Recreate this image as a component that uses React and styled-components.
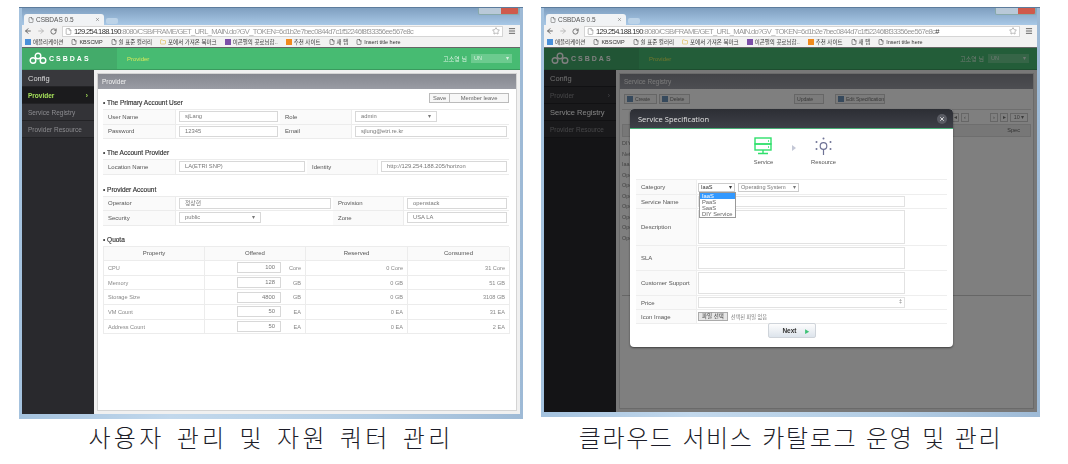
import React from 'react'
import styled, { createGlobalStyle } from 'styled-components'
import { ArrowLeft, ArrowRight, RotateCw, File, Folder, Star, Menu, X } from 'lucide-react'

const GlobalStyle = createGlobalStyle`
  html, body { margin: 0; padding: 0; background: #fff; }
  body { font-family: "Liberation Sans", "Noto Sans CJK KR", sans-serif; }
  * { box-sizing: border-box; }
`

const Stage = styled.div`
  width: 1068px;
  height: 464px;
  padding: 7px 0 0 19px;
  display: flex;
  gap: 18px;
  overflow: hidden;
`
const Figure = styled.figure`
  margin: 0;
  width: ${p => p.$w}px;
  display: flex;
  flex-direction: column;
  align-items: center;
`
const Caption = styled.figcaption`
  margin-top: ${p => p.$top}px;
  font-family: "Noto Sans CJK KR", sans-serif;
  font-weight: 300;
  font-size: 24px;
  line-height: 28px;
  letter-spacing: ${p => p.$track}px;
  word-spacing: ${p => p.$word}px;
  color: #1c1c28;
  white-space: nowrap;
`

const Win = styled.div`
  width: 100%;
  height: ${p => p.$h}px;
  padding: 0 3px 5px;
  display: flex;
  flex-direction: column;
  background: linear-gradient(90deg, #a4c2de, #c2d8ec 30%, #b3cde4 70%, #9ebad6);
  border-top: 1px solid #5d7c9c;
  filter: blur(0.45px);
`
const TabStrip = styled.div`
  height: 17px;
  flex: none;
  display: flex;
  align-items: flex-end;
  padding-left: 2px;
  gap: 2px;
  position: relative;
  background: linear-gradient(180deg, #7f9fc0, #a8c8e6);
`
const Tab = styled.div`
  width: 80px;
  height: 11px;
  background: #f1f3f5;
  border-radius: 3px 3px 0 0;
  font-size: 6.5px;
  color: #555;
  display: flex;
  align-items: center;
  gap: 2px;
  padding: 0 4px;
  span { flex: 1; }
`
const NewTab = styled.div`
  width: 12px;
  height: 6px;
  background: #bcd3e8;
  border-radius: 2px;
  margin-bottom: 1px;
`
const WinButtons = styled.div`
  position: absolute;
  top: 0;
  right: 1px;
  width: 41px;
  height: 7px;
  display: flex;
  border: 1px solid #8aa;
  border-top: 0;
  border-radius: 0 0 2px 2px;
  overflow: hidden;
  i { flex: 1; background: #b9c9d8; }
  i:last-child { flex: 1.6; background: #cf5a4c; }
`
const Toolbar = styled.div`
  height: 12px;
  flex: none;
  background: #f2f2f2;
  display: flex;
  align-items: center;
  gap: 5px;
  padding: 0 4px 0 2px;
  color: #666;
`
const Address = styled.div`
  flex: 1;
  min-width: 0;
  height: 11px;
  background: #fff;
  border: 1px solid #d5d5d5;
  font-size: 7.6px;
  line-height: 9px;
  letter-spacing: -0.68px;
  color: #333;
  display: flex;
  align-items: center;
  gap: 2px;
  padding: 0 2px;
  white-space: nowrap;
  b { font-weight: 400; color: #999; }
  em { flex: 1; }
`
const Bookmarks = styled.div`
  height: 11px;
  flex: none;
  background: #f2f2f2;
  border-bottom: 1px solid #666;
  display: flex;
  align-items: center;
  gap: 8px;
  padding: 0 3px;
  font-size: 5.5px;
  color: #333;
  white-space: nowrap;
`
const Mark = styled.span`
  display: inline-flex;
  align-items: center;
  gap: 2px;
`
const Swatch = styled.i`
  width: 6px;
  height: 6px;
  background: ${p => p.$c};
`

const AppArea = styled.div`
  flex: 1;
  min-height: 0;
  position: relative;
  display: flex;
  flex-direction: column;
  overflow: hidden;
`
const Head = styled.header`
  height: 22px;
  flex: none;
  display: flex;
  align-items: center;
  background: #47bb72;
  border-bottom: 1px solid #3a9a5e;
`
const Brand = styled.div`
  width: 95px;
  height: 100%;
  flex: none;
  background: #43ab6a;
  display: flex;
  align-items: center;
  gap: 2px;
  padding-left: 7px;
  color: #fff;
  font-weight: 700;
  font-size: 7px;
  letter-spacing: 2px;
`
const HeadTitle = styled.div`
  flex: 1;
  padding-left: 10px;
  font-size: 6px;
  color: #d6e85a;
`
const User = styled.div`
  font-size: 6px;
  color: #d5f0de;
  margin-right: 4px;
`
const UserBox = styled.div`
  width: 41px;
  height: 9px;
  margin-right: 8px;
  background: #6ccb8f;
  color: #d5f0de;
  font-size: 5.5px;
  padding: 1px 3px;
  display: flex;
  justify-content: space-between;
`
const Body = styled.div`
  flex: 1;
  min-height: 0;
  display: flex;
`
const Side = styled.nav`
  width: 72px;
  flex: none;
  background: #29292d;
`
const SideItem = styled.div`
  height: 17px;
  display: flex;
  align-items: center;
  justify-content: space-between;
  padding: 0 6px;
  font-size: ${p => (p.$big ? 7.5 : 6.5)}px;
  font-weight: ${p => (p.$active ? 700 : 400)};
  color: ${p => (p.$active ? '#a6e05a' : p.$big ? '#fff' : '#8c8c90')};
  background: ${p => (p.$active ? '#1b1b1d' : p.$head ? '#38383c' : '#333337')};
  border-bottom: 1px solid #232326;
  ${p => p.$head && 'color: #ddd; font-size: 7.5px;'}
`
const Main = styled.main`
  flex: 1;
  min-width: 0;
  padding: 3px;
  background: #f0f0f0;
  display: flex;
`
const Panel = styled.section`
  flex: 1;
  min-width: 0;
  background: #fff;
  border: 1px solid #d4d4d4;
`
const PanelHead = styled.div`
  height: 15px;
  background: linear-gradient(180deg, #85878f, #9a9ca4);
  color: #f2f2f2;
  font-size: 6.5px;
  line-height: 15px;
  padding-left: 4px;
`
const PanelBody = styled.div`
  padding: 4px 7px 0 5px;
`
const Actions = styled.div`
  float: right;
  display: flex;
  height: 10px;
`
const ActionBtn = styled.div`
  width: ${p => p.$w}px;
  border: 1px solid #bbb;
  margin-left: -1px;
  background: #f7f7f7;
  font-size: 5.8px;
  line-height: 8px;
  color: #666;
  text-align: center;
`
const Section = styled.div`
  margin-top: ${p => p.$top}px;
`
const SectionTitle = styled.h3`
  margin: 0;
  height: 12px;
  font-size: 6.5px;
  line-height: 11px;
  font-weight: 400;
  color: #333;
  -webkit-text-stroke: 0.15px #333;
`
const Form = styled.div`
  display: grid;
  grid-template-columns: ${p => p.$cols};
  grid-auto-rows: 14.5px;
  border-top: 1px solid #ececec;
`
const Label = styled.div`
  background: #fafafa;
  border-bottom: 1px solid #ececec;
  border-right: 1px solid #ececec;
  font-size: 6px;
  color: #555;
  display: flex;
  align-items: center;
  padding-left: 5px;
`
const Value = styled.div`
  border-bottom: 1px solid #ececec;
  display: flex;
  align-items: center;
  padding: 0 2px 0 3px;
`
const Box = styled.div`
  width: ${p => (p.$w ? `${p.$w}px` : '100%')};
  height: 11px;
  border: 1px solid #d8d8d8;
  background: #fff;
  font-size: 5.8px;
  line-height: 9px;
  color: #777;
  padding: 0 5px;
  display: flex;
  justify-content: ${p => (p.$right ? 'flex-end' : 'space-between')};
`
const Quota = styled.div`
  display: grid;
  grid-template-columns: 101px 101px 102px 102px;
  grid-template-rows: 14.5px;
  grid-auto-rows: 14.7px;
  border-top: 1px solid #ececec;
  border-left: 1px solid #ececec;
`
const QHead = styled.div`
  background: #fafafa;
  border-bottom: 1px solid #ececec;
  border-right: 1px solid #ececec;
  font-size: 6px;
  color: #555;
  display: flex;
  align-items: center;
  justify-content: center;
`
const QCell = styled.div`
  border-bottom: 1px solid #ececec;
  border-right: 1px solid #ececec;
  font-size: 5.6px;
  color: #888;
  display: flex;
  align-items: center;
  justify-content: ${p => (p.$left ? 'flex-start' : 'flex-end')};
  padding: 0 4px;
`
const Unit = styled.span`
  width: 20px;
  text-align: right;
`

const RegBody = styled.div`
  padding: 5px 2px 0;
  height: calc(100% - 15px);
  display: flex;
  flex-direction: column;
`
const RegBar = styled.div`
  display: flex;
  align-items: flex-start;
  height: 16px;
  padding-left: 2px;
  gap: 2px;
  border-bottom: 1px solid #ddd;
`
const RegBtn = styled.div`
  height: 10px;
  width: ${p => p.$w}px;
  margin-left: ${p => p.$ml || 0}px;
  border: 1px solid #ccc;
  background: #f6f6f6;
  font-size: 5.2px;
  line-height: 8px;
  letter-spacing: -0.1px;
  color: #777;
  white-space: nowrap;
  display: flex;
  align-items: center;
  gap: 2px;
  padding-left: 2px;
  &::before {
    content: "";
    width: 6px;
    height: 6px;
    flex: none;
    background: ${p => (p.$icon ? '#6d93b8' : 'transparent')};
    display: ${p => (p.$icon ? 'block' : 'none')};
  }
`
const Pager = styled.div`
  height: 14px;
  display: flex;
  justify-content: flex-end;
  align-items: center;
  gap: 2px;
  padding-right: 3px;
  font-size: 5.5px;
  color: #777;
`
const PagerGap = styled.span`
  width: 17px;
`
const PagerBtn = styled.span`
  width: ${p => p.$w || 8}px;
  height: 9px;
  border: 1px solid #ccc;
  text-align: center;
  line-height: 7px;
`
const RegHead = styled.div`
  height: 13px;
  background: #efefef;
  border: 1px solid #ddd;
  font-size: 5.6px;
  line-height: 11px;
  color: #666;
  text-align: right;
  padding-right: 10px;
`
const RegRows = styled.div`
  height: 159px;
  border-bottom: 1px solid #ccc;
  padding-top: 1px;
`
const RegRow = styled.div`
  height: 10.5px;
  font-size: 5.5px;
  line-height: 10px;
  color: #888;
`

const Dim = styled.div`
  position: absolute;
  inset: 0;
  background: rgba(0, 0, 0, 0.5);
`
const Modal = styled.div`
  position: absolute;
  left: 86px;
  top: 61px;
  width: 323px;
  height: 238px;
  background: #fff;
  border-radius: 4px;
  overflow: hidden;
  box-shadow: 0 1px 2px rgba(0, 0, 0, 0.5);
`
const ModalHead = styled.div`
  height: 20px;
  background: linear-gradient(180deg, #2c2e34, #3e4048);
  border-bottom: 1px solid #48b077;
  display: flex;
  align-items: center;
  justify-content: space-between;
  padding: 0 6px 0 8px;
  color: #e2e2e2;
  font-family: "Open Sans", sans-serif;
  font-size: 7.5px;
`
const Close = styled.span`
  width: 10px;
  height: 10px;
  border-radius: 50%;
  background: #5a5c64;
  color: #fff;
  display: flex;
  align-items: center;
  justify-content: center;
`
const Steps = styled.div`
  height: 50px;
  display: flex;
  justify-content: center;
  align-items: flex-start;
  padding: 8px 0 0 4px;
  gap: 13px;
`
const Step = styled.div`
  display: flex;
  flex-direction: column;
  align-items: center;
  gap: 3px;
  font-size: 5.8px;
  color: #555;
  width: 30px;
`
const StepArrow = styled.div`
  margin-top: 8px;
  width: 0;
  height: 0;
  border-left: 4px solid #c4c8d6;
  border-top: 3.5px solid transparent;
  border-bottom: 3.5px solid transparent;
`
const SpecForm = styled.div`
  margin: 0 6px;
  border-top: 1px solid #eee;
`
const SpecRow = styled.div`
  position: relative;
  height: ${p => p.$h}px;
  display: flex;
  border-bottom: 1px solid #eee;
`
const SpecLabel = styled.div`
  width: 61px;
  flex: none;
  background: #fafafa;
  border-right: 1px solid #eee;
  font-size: 6px;
  color: #555;
  display: flex;
  align-items: center;
  padding-left: 5px;
`
const SpecValue = styled.div`
  flex: 1;
  display: flex;
  align-items: center;
  gap: 3px;
  padding: 1px 0 1px 1px;
`
const SpecSelect = styled.div`
  width: ${p => p.$w}px;
  height: 9px;
  border: 1px solid #ccc;
  font-size: 5.6px;
  line-height: 7px;
  color: ${p => (p.$strong ? '#333' : '#777')};
  padding: 0 2px;
  display: flex;
  justify-content: space-between;
`
const SpecInput = styled.div`
  width: 207px;
  height: 100%;
  border: 1px solid #e2e2e2;
  font-size: 5.6px;
  color: #777;
  text-align: right;
  padding-right: 2px;
`
const Dropdown = styled.ul`
  position: absolute;
  z-index: 2;
  left: 63px;
  top: 12px;
  width: 37px;
  margin: 0;
  padding: 0;
  list-style: none;
  background: #fff;
  border: 1px solid #999;
  font-size: 5.8px;
  color: #666;
`
const Option = styled.li`
  height: 6px;
  line-height: 6px;
  padding-left: 2px;
  ${p => p.$on && 'background: #3399ff; color: #fff;'}
`
const FileBtn = styled.span`
  height: 9px;
  padding: 0 3px;
  background: #e6e6e6;
  border: 1px solid #aaa;
  font-size: 5.5px;
  line-height: 7px;
  color: #333;
`
const FileNote = styled.span`
  font-size: 5.2px;
  color: #777;
`
const NextWrap = styled.div`
  display: flex;
  justify-content: center;
  margin-top: -1px;
  position: relative;
`
const NextBtn = styled.div`
  width: 48px;
  height: 15px;
  border: 1px solid #cfd4da;
  border-radius: 2px;
  background: linear-gradient(180deg, #fdfdfd, #dde4ec);
  font-size: 6.5px;
  font-weight: 700;
  color: #333;
  display: flex;
  align-items: center;
  justify-content: flex-end;
  gap: 8px;
  padding-right: 5px;
  i { color: #3fc277; font-style: normal; font-size: 5px; }
`

const Logo = () => (
  <svg width="18" height="13" viewBox="0 0 18 13" fill="none" stroke="#fff" strokeWidth="1.4">
    <circle cx="4" cy="8.5" r="2.8" />
    <circle cx="9" cy="4" r="2.8" />
    <circle cx="14" cy="8.5" r="2.8" />
  </svg>
)

const ServerIcon = () => (
  <svg width="19" height="19" viewBox="0 0 19 19" fill="none" stroke="#2fe06c" strokeWidth="1.4">
    <rect x="1" y="1" width="16" height="6" />
    <rect x="1" y="7" width="16" height="6" />
    <path d="M9 13v3M4 16.5h10" />
    <path d="M14 4h1M14 10h1" />
  </svg>
)

const ResourceIcon = () => (
  <svg width="19" height="19" viewBox="0 0 19 19" fill="#6f7396" stroke="#6f7396" strokeWidth="1.2">
    <circle cx="9.5" cy="9" r="3.3" fill="none" />
    <path d="M9.5 12.3V18" />
    <circle cx="9.5" cy="1.5" r="1" stroke="none" />
    <circle cx="2.5" cy="5" r="1" stroke="none" />
    <circle cx="16.5" cy="5" r="1" stroke="none" />
    <circle cx="2.5" cy="12" r="1" stroke="none" />
    <circle cx="16.5" cy="12" r="1" stroke="none" />
  </svg>
)

const Chrome = ({ url, hash }) => (
  <>
    <TabStrip>
      <Tab>
        <File size={6} />
        <span>CSBDAS 0.5</span>
        <X size={5} />
      </Tab>
      <NewTab />
      <WinButtons><i /><i /><i /></WinButtons>
    </TabStrip>
    <Toolbar>
      <ArrowLeft size={8} strokeWidth={3} />
      <ArrowRight size={8} strokeWidth={3} color="#bbb" />
      <RotateCw size={7} strokeWidth={3} />
      <Address>
        <File size={7} color="#888" />
        <span>129.254.188.190<b>{url}</b>{hash}</span>
        <em />
        <Star size={8} color="#999" />
      </Address>
      <Menu size={8} strokeWidth={3} />
    </Toolbar>
    <Bookmarks>
      <Mark><Swatch $c="#4a90d9" />애플리케이션</Mark>
      <Mark><File size={6} />KBSCMP</Mark>
      <Mark><File size={6} />쉴 표준 컬러리</Mark>
      <Mark><Folder size={6} color="#d8a826" />포에서 가져온 북마크</Mark>
      <Mark><Swatch $c="#7b4fa8" />이곤펄의 곳로님합..</Mark>
      <Mark><Swatch $c="#f08a1d" />추천 사이트</Mark>
      <Mark><File size={6} />새 탭</Mark>
      <Mark><File size={6} />Insert title here</Mark>
    </Bookmarks>
  </>
)

const AppHeader = ({ title }) => (
  <Head>
    <Brand><Logo />CSBDAS</Brand>
    <HeadTitle>{title}</HeadTitle>
    <User>고소영 님</User>
    <UserBox>UN<span>▾</span></UserBox>
  </Head>
)

const quotas = [
  ['CPU', '100', 'Core', '0 Core', '31 Core'],
  ['Memory', '128', 'GB', '0 GB', '51 GB'],
  ['Storage Size', '4800', 'GB', '0 GB', '3108 GB'],
  ['VM Count', '50', 'EA', '0 EA', '31 EA'],
  ['Address Count', '50', 'EA', '0 EA', '2 EA'],
]

const ProviderScreen = () => (
  <AppArea>
    <AppHeader title="Provider" />
    <Body>
      <Side>
        <SideItem $head>Config</SideItem>
        <SideItem $active>Provider<span>›</span></SideItem>
        <SideItem>Service Registry</SideItem>
        <SideItem>Provider Resource</SideItem>
      </Side>
      <Main>
        <Panel>
          <PanelHead>Provider</PanelHead>
          <PanelBody>
            <Actions>
              <ActionBtn $w={21}>Save</ActionBtn>
              <ActionBtn $w={60}>Member leave</ActionBtn>
            </Actions>
            <Section $top={4}>
              <SectionTitle>• The Primary Account User</SectionTitle>
              <Form $cols="73px 104px 72px 157px">
                <Label>User Name</Label>
                <Value><Box>sjLang</Box></Value>
                <Label>Role</Label>
                <Value><Box $w={82}>admin<span>▾</span></Box></Value>
                <Label>Password</Label>
                <Value><Box>12345</Box></Value>
                <Label>Email</Label>
                <Value><Box>sjlung@etri.re.kr</Box></Value>
              </Form>
            </Section>
            <Section $top={8}>
              <SectionTitle>• The Account Provider</SectionTitle>
              <Form $cols="73px 131px 71px 131px">
                <Label>Location Name</Label>
                <Value><Box>LA(ETRI SNP)</Box></Value>
                <Label>Identity</Label>
                <Value><Box>http://129.254.188.205/horizon</Box></Value>
              </Form>
            </Section>
            <Section $top={9}>
              <SectionTitle>• Provider Account</SectionTitle>
              <Form $cols="73px 157px 71px 105px">
                <Label>Operator</Label>
                <Value><Box>정상현</Box></Value>
                <Label>Provision</Label>
                <Value><Box>openstack</Box></Value>
                <Label>Security</Label>
                <Value><Box $w={82}>public<span>▾</span></Box></Value>
                <Label>Zone</Label>
                <Value><Box>USA LA</Box></Value>
              </Form>
            </Section>
            <Section $top={8}>
              <SectionTitle>• Quota</SectionTitle>
              <Quota>
                <QHead>Property</QHead>
                <QHead>Offered</QHead>
                <QHead>Reserved</QHead>
                <QHead>Consumed</QHead>
                {quotas.map(q => (
                  <React.Fragment key={q[0]}>
                    <QCell $left>{q[0]}</QCell>
                    <QCell><Box $w={44} $right>{q[1]}</Box><Unit>{q[2]}</Unit></QCell>
                    <QCell>{q[3]}</QCell>
                    <QCell>{q[4]}</QCell>
                  </React.Fragment>
                ))}
              </Quota>
            </Section>
          </PanelBody>
        </Panel>
      </Main>
    </Body>
  </AppArea>
)

const regRows = ['DIY', 'Netw', 'IaaS', 'Ope', 'Ope', 'Ope', 'Ope', 'Ope', 'Ope', 'Ope']

const RegistryScreen = () => (
  <AppArea>
    <AppHeader title="Provider" />
    <Body>
      <Side>
        <SideItem $head>Config</SideItem>
        <SideItem>Provider<span>›</span></SideItem>
        <SideItem $big>Service Registry</SideItem>
        <SideItem>Provider Resource</SideItem>
      </Side>
      <Main>
        <Panel>
          <PanelHead>Service Registry</PanelHead>
          <RegBody>
            <RegBar>
              <RegBtn $w={33} $icon>Create</RegBtn>
              <RegBtn $w={31} $icon>Delete</RegBtn>
              <RegBtn $w={30} $ml={102}>Update</RegBtn>
              <RegBtn $w={50} $ml={9} $icon>Edit Specification</RegBtn>
            </RegBar>
            <Pager>
              <PagerBtn>◂</PagerBtn>
              <PagerBtn>‹</PagerBtn>
              <PagerGap />
              <PagerBtn>›</PagerBtn>
              <PagerBtn>▸</PagerBtn>
              <PagerBtn $w={18}>10 ▾</PagerBtn>
            </Pager>
            <RegHead>Spec</RegHead>
            <RegRows>
              {regRows.map((r, i) => <RegRow key={i}>{r}</RegRow>)}
            </RegRows>
          </RegBody>
        </Panel>
      </Main>
    </Body>
    <Dim />
    <Modal>
      <ModalHead>
        Service Specification
        <Close><X size={6} strokeWidth={3} /></Close>
      </ModalHead>
      <Steps>
        <Step><ServerIcon />Service</Step>
        <StepArrow />
        <Step><ResourceIcon />Resource</Step>
      </Steps>
      <SpecForm>
        <SpecRow $h={15}>
          <SpecLabel>Category</SpecLabel>
          <SpecValue>
            <SpecSelect $w={37} $strong>IaaS<span>▾</span></SpecSelect>
            <SpecSelect $w={61}>Operating System<span>▾</span></SpecSelect>
          </SpecValue>
          <Dropdown>
            <Option $on>IaaS</Option>
            <Option>PaaS</Option>
            <Option>SaaS</Option>
            <Option>DIY Service</Option>
          </Dropdown>
        </SpecRow>
        <SpecRow $h={14}>
          <SpecLabel>Service Name</SpecLabel>
          <SpecValue><SpecInput /></SpecValue>
        </SpecRow>
        <SpecRow $h={37}>
          <SpecLabel>Description</SpecLabel>
          <SpecValue><SpecInput /></SpecValue>
        </SpecRow>
        <SpecRow $h={25}>
          <SpecLabel>SLA</SpecLabel>
          <SpecValue><SpecInput /></SpecValue>
        </SpecRow>
        <SpecRow $h={25}>
          <SpecLabel>Customer Support</SpecLabel>
          <SpecValue><SpecInput /></SpecValue>
        </SpecRow>
        <SpecRow $h={14}>
          <SpecLabel>Price</SpecLabel>
          <SpecValue><SpecInput>‡</SpecInput></SpecValue>
        </SpecRow>
        <SpecRow $h={14}>
          <SpecLabel>Icon Image</SpecLabel>
          <SpecValue>
            <FileBtn>파일 선택</FileBtn>
            <FileNote>선택된 파일 없음</FileNote>
          </SpecValue>
        </SpecRow>
      </SpecForm>
      <NextWrap>
        <NextBtn>Next<i>▶</i></NextBtn>
      </NextWrap>
    </Modal>
  </AppArea>
)

const TOKEN = ':8080/CSB/FRAME/GET_URL_MAIN.do?GV_TOKEN=6d1b2e7bec0844d7c1f52246f8f33356ee567e8c'

export default function App() {
  return (
    <>
      <GlobalStyle />
      <Stage>
        <Figure $w={504}>
          <Win $h={412}>
            <Chrome url={TOKEN} />
            <ProviderScreen />
          </Win>
          <Caption $top={4} $track={3.3} $word={3.5}>사용자 관리 및 자원 쿼터 관리</Caption>
        </Figure>
        <Figure $w={499}>
          <Win $h={410}>
            <Chrome url={TOKEN} hash="#" />
            <RegistryScreen />
          </Win>
          <Caption $top={6} $track={1.6} $word={2}>클라우드 서비스 카탈로그 운영 및 관리</Caption>
        </Figure>
      </Stage>
    </>
  )
}
